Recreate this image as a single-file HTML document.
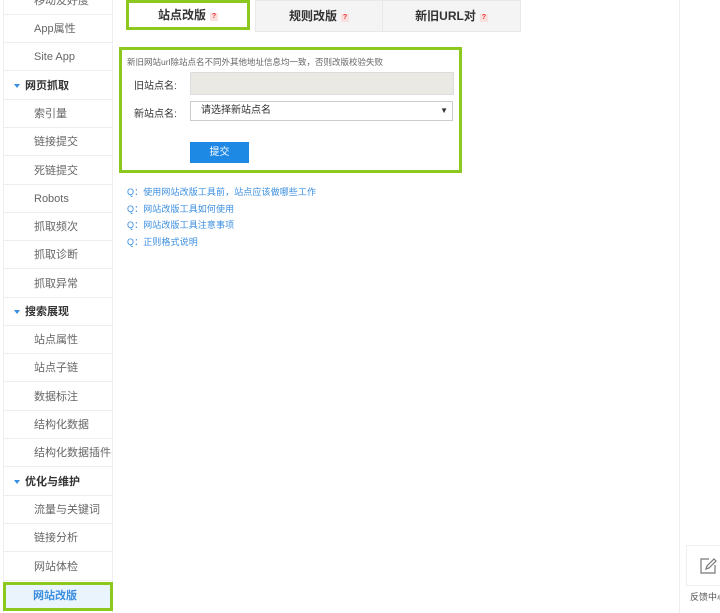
<!DOCTYPE html>
<html><head><meta charset="utf-8"><style>
*{margin:0;padding:0;box-sizing:border-box}
body{width:720px;height:613px;overflow:hidden;background:#fff;font-family:"Liberation Sans","Noto Sans CJK SC",sans-serif;font-size:11px;color:#555;position:relative}
.side{position:absolute;left:3px;top:0;width:110px;height:613px;border-left:1px solid #eee;border-right:1px solid #eee}
.it{position:absolute;left:0;width:108px;height:28px;line-height:28px;border-bottom:1px solid #eee;padding-left:30px;color:#666}
.hd{padding-left:10px;color:#333;font-weight:bold}
.hd:before{content:"";display:inline-block;border:3px solid transparent;border-top:4px solid #3b8ee0;margin-right:5px;vertical-align:middle;margin-top:2px}
.act{border:3px solid #8cc81e;background:#eaf4fd;color:#3b8ee0;line-height:22px;padding-left:27px;font-weight:bold}
.tab{position:absolute;top:0;height:32px;background:#f4f4f4;border:1px solid #e8e8e8;text-align:center;line-height:31px;font-weight:bold;color:#333;font-size:12px}
.q{display:inline-block;width:8px;height:8px;background:#fbe0e0;color:#e33;font-size:7px;line-height:8px;text-align:center;margin-left:4px;vertical-align:1px}
.a{position:absolute;left:127px;color:#3b8ee0;font-size:9px;letter-spacing:0.1px}
</style></head><body>
<div class="side">
<div class="it" style="top:-13px">移动友好度</div>
<div class="it" style="top:15px">App属性</div>
<div class="it" style="top:43px">Site App</div>
<div class="it hd" style="top:72px">网页抓取</div>
<div class="it" style="top:100px">索引量</div>
<div class="it" style="top:128px">链接提交</div>
<div class="it" style="top:157px">死链提交</div>
<div class="it" style="top:185px">Robots</div>
<div class="it" style="top:213px">抓取频次</div>
<div class="it" style="top:241px">抓取诊断</div>
<div class="it" style="top:270px">抓取异常</div>
<div class="it hd" style="top:298px">搜索展现</div>
<div class="it" style="top:326px">站点属性</div>
<div class="it" style="top:354px">站点子链</div>
<div class="it" style="top:383px">数据标注</div>
<div class="it" style="top:411px">结构化数据</div>
<div class="it" style="top:439px">结构化数据插件</div>
<div class="it hd" style="top:468px">优化与维护</div>
<div class="it" style="top:496px">流量与关键词</div>
<div class="it" style="top:524px">链接分析</div>
<div class="it" style="top:553px">网站体检</div>
<div class="it act" style="top:582px;left:-1px;width:110px;height:29px">网站改版</div>
</div>
<div class="tab" style="left:126px;width:124px;height:30px;background:#fff;border:3px solid #8cc81e;line-height:25px">站点改版<span class="q">?</span></div>
<div class="tab" style="left:255px;width:128px">规则改版<span class="q">?</span></div>
<div class="tab" style="left:382px;width:139px">新旧URL对<span class="q">?</span></div>
<div style="position:absolute;left:679px;top:0;width:1px;height:613px;background:#eee"></div>
<div style="position:absolute;left:119px;top:47px;width:343px;height:126px;border:3px solid #8cc81e"></div>
<div style="position:absolute;left:127px;top:56px;font-size:8.5px;color:#666">新旧网站url除站点名不同外其他地址信息均一致，否则改版校验失败</div>
<div style="position:absolute;left:134px;top:77px;font-size:10px;color:#333">旧站点名:</div>
<div style="position:absolute;left:190px;top:72px;width:264px;height:23px;background:#ebe9e4;border:1px solid #ddd"></div>
<div style="position:absolute;left:134px;top:105px;font-size:10px;color:#333">新站点名:</div>
<div style="position:absolute;left:190px;top:101px;width:263px;height:20px;border:1px solid #ccc;background:#fff;font-size:10px;color:#333;line-height:18px;padding-left:10px">请选择新站点名<span style="position:absolute;right:4px;font-size:8px">▼</span></div>
<div style="position:absolute;left:190px;top:142px;width:59px;height:21px;background:#1e88e5;color:#fff;font-size:10px;text-align:center;line-height:21px">提交</div>
<div class="a" style="top:185px">Q：使用网站改版工具前，站点应该做哪些工作</div>
<div class="a" style="top:202px">Q：网站改版工具如何使用</div>
<div class="a" style="top:218px">Q：网站改版工具注意事项</div>
<div class="a" style="top:235px">Q：正则格式说明</div>
<div style="position:absolute;left:686px;top:545px;width:40px;height:41px;border:1px solid #eee;background:#fff">
<svg width="20" height="20" viewBox="0 0 20 20" style="position:absolute;left:11px;top:10px" fill="none" stroke="#777" stroke-width="1.2"><path d="M11 3H3v14h14V9"/><path d="M8 13l1-3 7-7 2 2-7 7z"/></svg></div>
<div style="position:absolute;left:690px;top:590px;font-size:9px;color:#555;white-space:nowrap">反馈中心</div>
</body></html>
